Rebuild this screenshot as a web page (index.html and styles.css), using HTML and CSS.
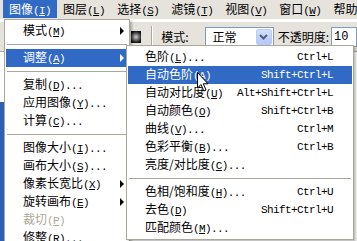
FILE: index.html
```html
<!DOCTYPE html>
<html lang="zh-CN">
<head>
  <meta charset="UTF-8">
  <title>图像 - 调整</title>
  <link rel="stylesheet" href="styles.css">
</head>
<body>
<div class="app">
  <nav class="menubar">
    <span class="mb-item active">图像<span class="en">(<u>I</u>)</span></span>
    <span class="mb-item">图层<span class="en">(<u>L</u>)</span></span>
    <span class="mb-item">选择<span class="en">(<u>S</u>)</span></span>
    <span class="mb-item">滤镜<span class="en">(<u>T</u>)</span></span>
    <span class="mb-item">视图<span class="en">(<u>V</u>)</span></span>
    <span class="mb-item">窗口<span class="en">(<u>W</u>)</span></span>
    <span class="mb-item">帮助</span>
  </nav>

  <div class="toolbar">
    <span class="brush"></span>
    <span class="tb-sep"></span>
    <span class="label">模式:</span>
    <div class="select">
      <span class="select-text">正常</span>
      <span class="select-btn">
        <svg width="9" height="6" viewBox="0 0 9 6"><path d="M1 1 L4.5 4.5 L8 1" fill="none" stroke="#4d6185" stroke-width="2"/></svg>
      </span>
    </div>
    <span class="label opacity">不透明度:</span>
    <div class="input">10</div>
  </div>

  <div class="workspace">
    <div class="dock"></div>
  </div>

  <!-- 图像 menu -->
  <div class="menu main-menu">
    <div class="mi"><span class="lb">模式<span class="en">(<u>M</u>)</span></span><span class="arrow"></span></div>
    <div class="sep"></div>
    <div class="mi hl"><span class="lb">调整<span class="en">(<u>A</u>)</span></span><span class="arrow"></span></div>
    <div class="sep"></div>
    <div class="mi"><span class="lb">复制<span class="en">(<u>D</u>)...</span></span></div>
    <div class="mi"><span class="lb">应用图像<span class="en">(<u>Y</u>)...</span></span></div>
    <div class="mi"><span class="lb">计算<span class="en">(<u>C</u>)...</span></span></div>
    <div class="sep"></div>
    <div class="mi"><span class="lb">图像大小<span class="en">(<u>I</u>)...</span></span></div>
    <div class="mi"><span class="lb">画布大小<span class="en">(<u>S</u>)...</span></span></div>
    <div class="mi"><span class="lb">像素长宽比<span class="en">(<u>X</u>)</span></span><span class="arrow"></span></div>
    <div class="mi"><span class="lb">旋转画布<span class="en">(<u>E</u>)</span></span><span class="arrow"></span></div>
    <div class="mi disabled"><span class="lb">裁切<span class="en">(<u>P</u>)</span></span></div>
    <div class="mi"><span class="lb">修整<span class="en">(<u>R</u>)...</span></span></div>
  </div>

  <!-- 调整 submenu -->
  <div class="menu sub-menu">
    <div class="mi"><span class="lb">色阶<span class="en">(<u>L</u>)...</span></span><span class="key">Ctrl+L</span></div>
    <div class="mi hl"><span class="lb">自动色阶<span class="en">(<u>A</u>)</span></span><span class="key">Shift+Ctrl+L</span></div>
    <div class="mi"><span class="lb">自动对比度<span class="en">(<u>U</u>)</span></span><span class="key">Alt+Shift+Ctrl+L</span></div>
    <div class="mi"><span class="lb">自动颜色<span class="en">(<u>O</u>)</span></span><span class="key">Shift+Ctrl+B</span></div>
    <div class="mi"><span class="lb">曲线<span class="en">(<u>V</u>)...</span></span><span class="key">Ctrl+M</span></div>
    <div class="mi"><span class="lb">色彩平衡<span class="en">(<u>B</u>)...</span></span><span class="key">Ctrl+B</span></div>
    <div class="mi"><span class="lb">亮度/对比度<span class="en">(<u>C</u>)...</span></span></div>
    <div class="sep"></div>
    <div class="mi"><span class="lb">色相/饱和度<span class="en">(<u>H</u>)...</span></span><span class="key">Ctrl+U</span></div>
    <div class="mi"><span class="lb">去色<span class="en">(<u>D</u>)</span></span><span class="key">Shift+Ctrl+U</span></div>
    <div class="mi"><span class="lb">匹配颜色<span class="en">(<u>M</u>)...</span></span></div>
  </div>

  <svg class="cursor" width="12" height="20" viewBox="0 0 12 20">
    <path d="M0.5 0.5 L0.5 16 L4 12.5 L6.8 19 L9 18 L6.3 11.8 L11 11.8 Z" fill="#fff" stroke="#000" stroke-width="1"/>
  </svg>
</div>
</body>
</html>
```

FILE: styles.css
```css
* {
  box-sizing: border-box;
}

body {
  margin: 0;
  width: 357px;
  height: 241px;
  overflow: hidden;
  background-color: #fff;
  color: #000;
  font-family: "Noto Sans CJK SC", sans-serif;
  font-size: 12px;
}

.app {
  position: relative;
  height: 241px;
  display: flex;
  flex-direction: column;
}

.en {
  font-family: "Liberation Mono", monospace;
  font-size: 11px;
  letter-spacing: -0.6px;
}

/* menu bar */
.menubar {
  display: flex;
  height: 20px;
  padding-left: 3px;
  background-color: #e5e3dc;
  border-bottom: 1px solid #fff;
  white-space: nowrap;
}

.mb-item {
  height: 18px;
  line-height: 18px;
  padding: 0 6px;
}

.mb-item.active {
  background-color: #316ac5;
  color: #fff;
}

/* options bar */
.toolbar {
  display: flex;
  align-items: center;
  height: 31px;
  margin-top: 1px;
  padding-left: 131px;
  background-color: #e5e3dc;
  border-top: 1px solid #fff;
  border-bottom: 1px solid #aca899;
  white-space: nowrap;
}

.brush {
  width: 12px;
  height: 12px;
  margin-right: 10px;
  background: radial-gradient(circle, #d0d0d0 0, #777 35%, #111 75%);
}

.tb-sep {
  width: 2px;
  height: 22px;
  margin-right: 8px;
  border-left: 1px solid #aca899;
  border-right: 1px solid #fff;
}

.label {
  line-height: 18px;
}

.select {
  display: flex;
  align-items: center;
  justify-content: space-between;
  width: 81px;
  height: 20px;
  margin-left: 16px;
  padding: 1px;
  background-color: #fff;
  border: 1px solid #7f9db9;
}

.select-text {
  padding-left: 6px;
}

.select-btn {
  display: flex;
  align-items: center;
  justify-content: center;
  width: 16px;
  height: 16px;
  border-radius: 2px;
  background: linear-gradient(#d2dffb, #b4c8f5);
  border: 1px solid #b9ccf4;
}

.opacity {
  margin-left: 4px;
}

.input {
  width: 30px;
  height: 20px;
  margin-left: 2px;
  padding-left: 2px;
  line-height: 18px;
  background-color: #fff;
  border: 1px solid #7f9db9;
  font-family: "Liberation Mono", monospace;
  font-size: 12px;
}

/* work area */
.workspace {
  flex: 1;
  display: flex;
}

.dock {
  width: 4px;
  background: linear-gradient(#fff 0, #fff 50px, #2f5fb3 50px);
}

/* dropdown menus */
.menu {
  position: absolute;
  background-color: #fff;
  border: 1px solid #aca899;
  padding: 2px 1px;
  box-shadow: 2px 2px 2px rgba(0, 0, 0, 0.25);
  white-space: nowrap;
}

.main-menu {
  left: 4px;
  top: 19px;
  width: 126px;
}

.sub-menu {
  left: 126px;
  top: 45px;
  width: 228px;
}

.mi {
  display: flex;
  align-items: center;
  height: 18px;
  padding-left: 17px;
}

.main-menu .mi {
  padding-right: 4px;
}

.sub-menu .mi {
  padding-right: 19px;
}

.mi.hl {
  background-color: #316ac5;
  color: #fff;
}

.mi.disabled {
  color: #aca899;
}

.lb {
  line-height: 18px;
}

.key {
  margin-left: auto;
  font-family: "Liberation Mono", monospace;
  font-size: 11px;
  letter-spacing: -0.6px;
}

.arrow {
  margin-left: auto;
  width: 0;
  height: 0;
  border-left: 4px solid #000;
  border-top: 4px solid transparent;
  border-bottom: 4px solid transparent;
}

.mi.hl .arrow {
  border-left-color: #fff;
}

.sep {
  height: 1px;
  margin: 4px 1px;
  background-color: #aca899;
}

.cursor {
  position: absolute;
  left: 197px;
  top: 72px;
}
```
